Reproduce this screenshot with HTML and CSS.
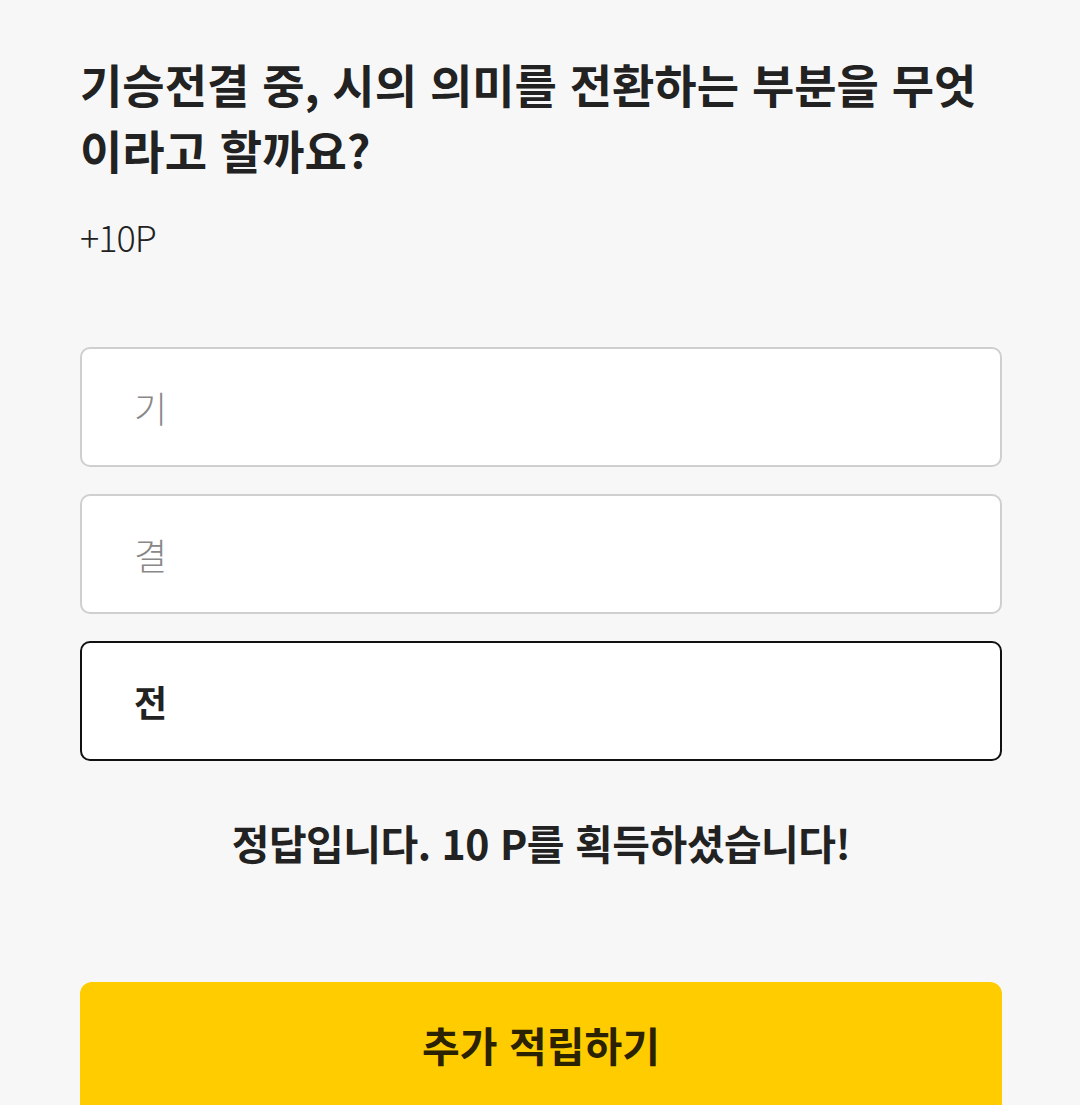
FILE: index.html
```html
<!doctype html>
<html lang="ko">
  <head>
    <meta charset="utf-8">
    <title>퀴즈</title>
    <link rel="stylesheet" href="styles.css">
  </head>
  <body>
    <div class="quiz">
      <h1 class="question">기승전결 중, 시의 의미를 전환하는 부분을 무엇이라고 할까요?</h1>
      <p class="reward">+10P</p>

      <div class="choices">
        <div class="choice">기</div>
        <div class="choice">결</div>
        <div class="choice choice-selected">전</div>
      </div>

      <p class="result">정답입니다. 10 P를 획득하셨습니다!</p>

      <button class="more-btn">추가 적립하기</button>
    </div>
  </body>
</html>
```

FILE: styles.css
```css
body {
  margin: 0;
  padding: 0;
  background-color: #f7f7f7;
  font-family: 'Noto Sans CJK KR', 'Noto Sans', sans-serif;
  color: #222;
  overflow: hidden;
}
.quiz {
  padding: 50px 78px 0 80px;
}
.question {
  margin: 0;
  font-size: 46px;
  font-weight: 700;
  line-height: 66px;
  letter-spacing: 0;
  word-break: break-all;
  color: #222;
}
.reward {
  margin: 32px 0 0 0;
  font-size: 36px;
  font-weight: 300;
  line-height: 44px;
  letter-spacing: -1px;
  color: #222;
}
.choices {
  display: flex;
  flex-direction: column;
  gap: 27px;
  margin-top: 89px;
}
.choice {
  box-sizing: border-box;
  height: 120px;
  display: flex;
  align-items: center;
  padding: 0 52px;
  background-color: #fff;
  border: 2px solid #cfcfcf;
  border-radius: 10px;
  font-size: 36px;
  color: #888;
  font-weight: 300;
}
.choice-selected {
  border-color: #111;
  color: #222;
  font-weight: 700;
}
.result {
  margin: 49px 0 0 0;
  text-align: center;
  font-size: 41px;
  font-weight: 700;
  line-height: 64px;
  letter-spacing: -0.5px;
}
.more-btn {
  display: block;
  width: 100%;
  height: 140px;
  margin-top: 108px;
  border: 0;
  border-radius: 12px;
  background-color: #ffcc00;
  color: #2a2200;
  font-family: inherit;
  font-size: 41px;
  font-weight: 700;
  padding-bottom: 17px;
}
```
